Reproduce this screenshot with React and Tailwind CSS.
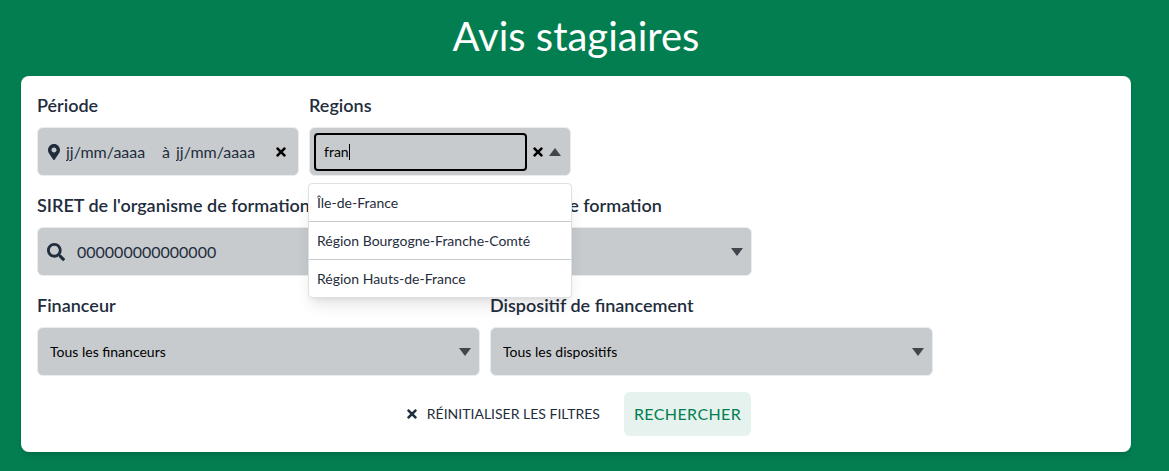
import { useState } from "react";
import { FaMapMarkerAlt, FaSearch, FaTimes } from "react-icons/fa";

const regions = [
  "Île-de-France",
  "Région Bourgogne-Franche-Comté",
  "Région Hauts-de-France",
];

function Triangle({ up = false }) {
  return (
    <svg width="12" height="8" viewBox="0 0 12 8" fill="#41464c" aria-hidden="true">
      <path d={up ? "M0 8 6 0l6 8z" : "M0 0h12L6 8z"} />
    </svg>
  );
}

function Field({ id, label, wide = false, children }) {
  return (
    <div className={wide ? "w-[443px]" : "w-[262px]"}>
      <label htmlFor={id} className="block pb-[10px] text-lg leading-6 font-semibold whitespace-nowrap">
        {label}
      </label>
      {children}
    </div>
  );
}

const box = "h-[49px] rounded-md border border-[#e9ecef] bg-[#c7cbce]";

function Select({ id, children }) {
  return (
    <div className="grid items-center">
      <select
        id={id}
        className={`${box} col-start-1 row-start-1 w-full appearance-none px-3 text-sm text-black`}
      >
        {children}
      </select>
      <span className="pointer-events-none col-start-1 row-start-1 mr-[9px] justify-self-end">
        <Triangle />
      </span>
    </div>
  );
}

export default function App() {
  const [query, setQuery] = useState("fran");

  return (
    <main className="min-h-screen bg-[#027e51] pt-3 pr-[38px] pb-[19px] pl-[21px] font-['Lato',sans-serif] text-[#1f2d3d]">
      <h1 className="pb-4 text-center text-[40px] leading-12 text-white">Avis stagiaires</h1>
      <form
        className="rounded-lg bg-white px-4 pt-[17px] pb-4 shadow-md"
        onSubmit={(e) => e.preventDefault()}
      >
        <div className="flex flex-col gap-[17px]">
          <div className="flex gap-[10px]">
            <Field id="start" label="Période">
              <div className={`${box} flex items-center px-[10px]`}>
                <FaMapMarkerAlt className="mr-[6px] size-4 w-3 shrink-0" />
                <input
                  id="start"
                  placeholder="jj/mm/aaaa"
                  className="w-24 min-w-0 outline-none placeholder:text-[#1f2d3d]"
                />
                <label htmlFor="end" className="mr-[6px]">à</label>
                <input
                  id="end"
                  placeholder="jj/mm/aaaa"
                  className="w-24 min-w-0 flex-1 outline-none placeholder:text-[#1f2d3d]"
                />
                <button type="button" aria-label="Effacer la période" className="text-black">
                  <FaTimes className="size-[14px]" />
                </button>
              </div>
            </Field>

            <Field id="region" label="Regions">
              <div className="relative">
                <div className={`${box} flex items-center gap-1 pr-[9px] pl-1`}>
                  <div className="relative min-w-0 flex-1">
                    <input
                      id="region"
                      value={query}
                      onChange={(e) => setQuery(e.target.value)}
                      className="h-[38px] w-full rounded-sm border-2 border-black px-2 text-sm text-black caret-transparent outline-none"
                    />
                    <span className="pointer-events-none absolute inset-y-0 left-[10px] flex items-center text-sm">
                      <span className="invisible">{query}</span>
                      <span className="h-4 w-px bg-black" />
                    </span>
                  </div>
                  <button type="button" aria-label="Effacer la région" className="text-black">
                    <FaTimes className="size-[14px]" />
                  </button>
                  <button type="button" aria-label="Fermer la liste">
                    <Triangle up />
                  </button>
                </div>
                <ul className="absolute top-14 -right-px -left-px z-10 divide-y divide-[#c7cbce] rounded-sm border border-[#dee0e2] bg-white text-sm shadow-lg">
                  {regions.map((name) => (
                    <li key={name}>
                      <button type="button" className="block h-[37px] w-full px-2 text-left">
                        {name}
                      </button>
                    </li>
                  ))}
                </ul>
              </div>
            </Field>
          </div>

          <div className="flex gap-[10px]">
            <Field id="siret" label="SIRET de l'organisme de formation" wide>
              <div className={`${box} flex items-center gap-3 px-[9px]`}>
                <FaSearch className="size-[18px] shrink-0" />
                <input
                  id="siret"
                  placeholder="000000000000000"
                  className="min-w-0 flex-1 outline-none placeholder:text-[#1f2d3d]"
                />
              </div>
            </Field>
            <Field id="goal" label="Objectif de formation">
              <Select id="goal">
                <option>Tous</option>
              </Select>
            </Field>
          </div>

          <div className="flex gap-[10px]">
            <Field id="funder" label="Financeur" wide>
              <Select id="funder">
                <option>Tous les financeurs</option>
              </Select>
            </Field>
            <Field id="scheme" label="Dispositif de financement" wide>
              <Select id="scheme">
                <option>Tous les dispositifs</option>
              </Select>
            </Field>
          </div>
        </div>

        <div className="flex items-center justify-center gap-6 pt-4 pl-1">
          <button type="reset" className="flex items-center gap-2 text-sm uppercase">
            <FaTimes className="size-[14px]" />
            Réinitialiser les filtres
          </button>
          <button
            type="submit"
            className="h-11 rounded-md bg-[#e5f2ed] px-[10px] tracking-wide text-[#027e51] uppercase"
          >
            Rechercher
          </button>
        </div>
      </form>
    </main>
  );
}
